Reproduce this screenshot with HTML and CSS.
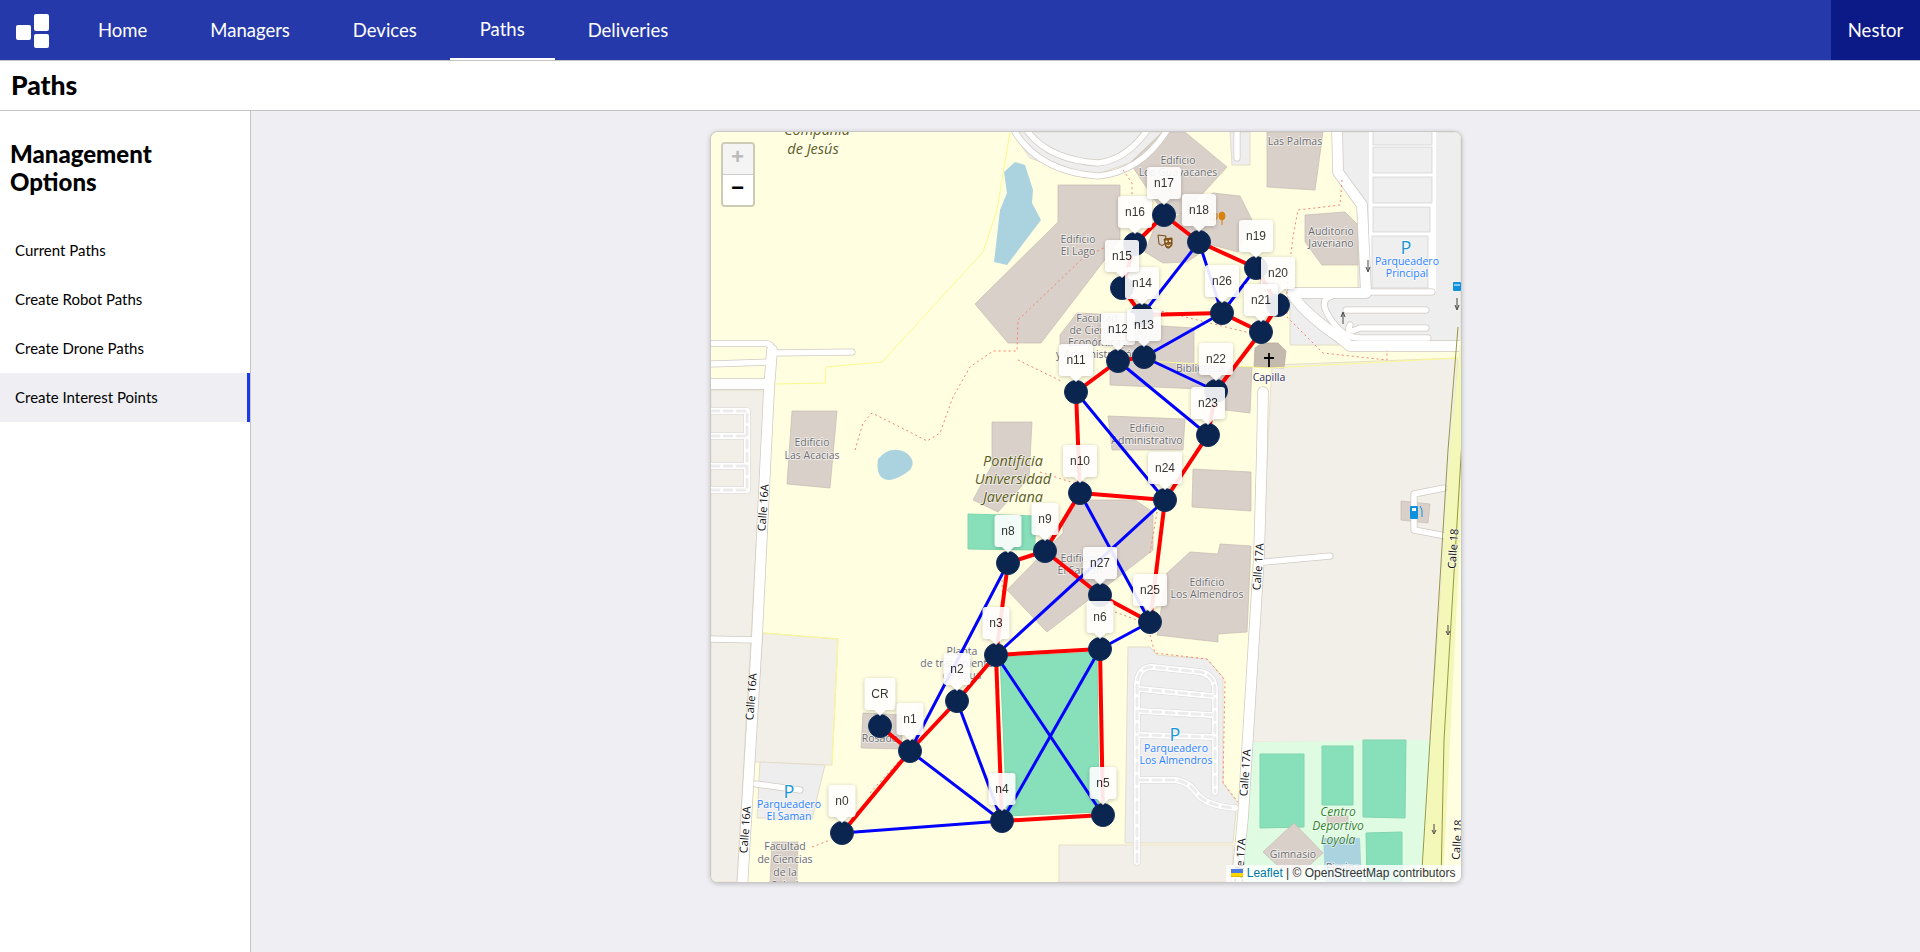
FILE: index.html
```html
<!DOCTYPE html>
<html lang="en">
<head>
    <meta charset="UTF-8">
    <meta name="viewport" content="width=device-width, initial-scale=1.0">
    <title>Paths</title>
    <link rel="stylesheet" href="styles.css">
</head>
<body>
    <nav class="navbar">
        <a class="logo" href="#">
            <svg width="33" height="34" viewBox="0 0 33 34">
                <rect x="0" y="11" width="15" height="15" rx="2"/>
                <rect x="18" y="0" width="15" height="17" rx="2"/>
                <rect x="18" y="20" width="15" height="14" rx="2"/>
            </svg>
        </a>
        <ul class="nav-links">
            <li><a href="#">Home</a></li>
            <li><a href="#">Managers</a></li>
            <li><a href="#">Devices</a></li>
            <li><a class="active" href="#">Paths</a></li>
            <li><a href="#">Deliveries</a></li>
        </ul>
        <a class="user" href="#">Nestor</a>
    </nav>
    <header class="page-title"><h1>Paths</h1></header>
    <div class="content">
        <aside class="sidebar">
            <h2>Management Options</h2>
            <ul class="side-links">
                <li><a href="#">Current Paths</a></li>
                <li><a href="#">Create Robot Paths</a></li>
                <li><a href="#">Create Drone Paths</a></li>
                <li><a class="active" href="#">Create Interest Points</a></li>
            </ul>
        </aside>
        <main class="main">
            <div class="map">
                <svg class="map-canvas" width="750" height="750" viewBox="711 132 750 750">
                    <defs>
                        <path id="tip-34" d="M-14 -48H14a3 3 0 0 1 3 3V-19a3 3 0 0 1 -3 3H6L0 -10L-6 -16H-14a3 3 0 0 1 -3 -3V-45a3 3 0 0 1 3 -3Z"/>
                        <path id="tip-27" d="M-10.500 -48H10.500a3 3 0 0 1 3 3V-19a3 3 0 0 1 -3 3H6L0 -10L-6 -16H-10.500a3 3 0 0 1 -3 -3V-45a3 3 0 0 1 3 -3Z"/>
                        <path id="tip-31" d="M-12.500 -48H12.500a3 3 0 0 1 3 3V-19a3 3 0 0 1 -3 3H6L0 -10L-6 -16H-12.500a3 3 0 0 1 -3 -3V-45a3 3 0 0 1 3 -3Z"/>
                        <g id="roads-wide">
                            <path d="M772 350L769 390L766 450L757 637L742 890"/>
                            <path d="M1263 392L1262 450L1259 556L1243 817L1236 890"/>
                            <path d="M711 384H769"/>
                            <path d="M1337 125L1338 172L1362 205L1366 292"/>
                            <path d="M1292 293H1366"/>
                            <path d="M1292 293Q1300 310 1340 338L1350 346H1460"/>
                        </g>
                        <g id="roads-thin">
                            <path d="M711 343.500H765Q772 343.500 772 350"/>
                            <path d="M772 353L852 352"/>
                            <path d="M711 364L769 362"/>
                            <path d="M1265 562L1330 556"/>
                            <path d="M1444 488L1414 494V530L1446 536"/>
                            <path d="M756 784L800 790"/>
                            <path d="M711 639L755 640"/>
                            <path d="M1366 292H1432"/>
                            <path d="M1332 296Q1315 300 1335 325Q1345 338 1360 338H1428"/>
                            <path d="M1350 325Q1345 335 1360 328H1426"/>
                            <path d="M1426 310H1346"/>
                            <path d="M1015 132Q1040 172 1098 176Q1140 172 1166 132"/>
                            <path d="M1028 132Q1050 160 1098 163Q1125 160 1146 132"/>
                            <path d="M1237 132V158"/>
                        </g>
                        <g id="lot-roads">
                            <path d="M1137 862V685Q1138 667 1152 667L1200 672Q1215 675 1215 690V792"/>
                            <path d="M1140 689L1212 696"/>
                            <path d="M1140 711L1212 715"/>
                            <path d="M1140 735L1212 737"/>
                            <path d="M1140 780H1175Q1190 782 1198 795Q1208 806 1235 808"/>
                            <path d="M711 411H747V490H711"/>
                            <path d="M711 436H747"/>
                            <path d="M711 466H747"/>
                        </g>
                    </defs>

                    <rect class="land" x="711" y="132" width="750" height="750"/>

                    <polygon class="plot" points="711,390 765,390 737,882 711,882"/>
                    <polygon class="plot" points="763,633 838,639 832,765 753,762"/>
                    <polygon class="plot" points="1272,365 1458,358 1430,742 1252,742"/>
                    <polygon class="plot" points="1059,845 1233,845 1233,882 1059,882"/>
                    <polygon class="lot" points="760,762 825,765 812,819 757,818"/>
                    <polygon class="lot" points="1128,647 1150,647 1157,655 1207,659 1223,677 1223,783 1237,802 1233,843 1125,843"/>
                    <polygon class="lot" points="1012,132 1030,158 1085,178 1130,163 1162,132"/>
                    <polygon class="lot" points="1337,132 1461,132 1461,345 1290,345 1290,292 1358,288 1358,205 1337,170"/>
                    <polygon class="lot" points="1230,132 1250,132 1250,165 1232,165"/>

                    <rect class="lot-white" x="1369" y="130" width="67" height="162"/>
                    <rect class="bay" x="1373" y="130" width="59" height="15"/>
                    <rect class="bay" x="1373" y="147" width="59" height="26"/>
                    <rect class="bay" x="1373" y="177" width="59" height="26"/>
                    <rect class="bay" x="1373" y="207" width="57" height="25"/>
                    <rect class="bay" x="1372" y="236" width="56" height="52"/>

                    <polygon class="sports" points="1253,742 1431,740 1421,882 1243,882"/>
                    <polygon class="pitch" points="1260,754 1304,754 1304,827 1260,828"/>
                    <polygon class="pitch" points="1322,746 1353,746 1353,805 1322,805"/>
                    <polygon class="pitch" points="1363,740 1406,740 1405,818 1363,817"/>
                    <polygon class="pitch" points="1366,833 1402,832 1402,882 1367,882"/>
                    <polygon class="pitch" points="968,514 1035,516 1035,550 968,549"/>
                    <polygon class="pitch" points="1000,657 1097,652 1099,812 1007,816"/>
                    <polygon class="water" points="1323,838 1360,838 1362,882 1325,882"/>
                    <polygon class="water" points="1015,162 1004,172 1007,193 1000,210 994,262 1007,265 1041,220 1032,203 1033,190 1025,165"/>
                    <path class="water" d="M878 459Q890 445 905 452Q917 460 910 470Q900 478 890 480Q875 480 878 459Z"/>

                    <polygon class="building" points="975,304 1058,222 1058,185 1120,185 1120,240 1041,343 1008,343"/>
                    <polygon class="building" points="1130,163 1163,132 1185,132 1227,167 1185,213 1165,215"/>
                    <polygon class="building" points="1213,193 1240,196 1252,220 1238,252 1212,245 1187,262 1163,263 1145,252 1156,223 1185,213"/>
                    <polygon class="building" points="1267,132 1323,132 1315,190 1267,187"/>
                    <polygon class="building" points="1305,215 1345,212 1358,225 1358,265 1322,265 1305,242"/>
                    <polygon class="building" points="1110,360 1145,325 1194,328 1194,365 1252,367 1250,413 1225,410 1222,390 1110,385"/>
                    <polygon class="building" points="1060,335 1077,313 1120,315 1120,345 1060,345"/>
                    <polygon class="building" points="1108,416 1185,419 1183,450 1112,450"/>
                    <polygon class="building" points="792,411 837,411 830,488 787,484"/>
                    <polygon class="building" points="992,422 1032,422 1029,478 998,512 973,500 992,465"/>
                    <polygon class="building" points="1007,590 1063,533 1063,520 1080,500 1135,500 1153,512 1153,550 1047,632"/>
                    <polygon class="building" points="1167,573 1190,552 1218,554 1220,544 1251,546 1247,632 1218,634 1218,642 1157,635"/>
                    <polygon class="building" points="1193,469 1251,472 1251,511 1192,507"/>
                    <polygon class="building" points="863,713 902,715 902,749 861,748"/>
                    <polygon class="building" points="772,842 798,842 797,882 770,882"/>
                    <polygon class="building" points="1294,823 1323,853 1293,880 1263,852"/>
                    <polygon class="building" points="1401,501 1430,504 1428,523 1401,520"/>
                    <rect class="building" x="1327" y="816" width="21" height="8"/>
                    <polygon class="chapel" points="1255,348 1262,343 1278,343 1286,351 1284,368 1254,367"/>

                    <path class="boundary" d="M1010 132L997 210L983 252L882 362L826 367L825 383L775 384"/>
                    <path class="boundary" d="M763 633L838 639L832 765"/>
                    <path class="boundary" d="M1130 360L1270 368L1458 358"/>

                    <use class="road-case wide" href="#roads-wide"/>
                    <use class="road-case thin" href="#roads-thin"/>
                    <use class="road wide" href="#roads-wide"/>
                    <use class="road thin" href="#roads-thin"/>
                    <use class="lot-road-case" href="#lot-roads"/>
                    <use class="lot-road" href="#lot-roads"/>
                    <use class="lot-road-dash" href="#lot-roads"/>

                    <path class="motorway" d="M1462 320L1450 450L1422 882H1443L1462 500Z"/>
                    <path class="motorway-edge" d="M1458 327L1448 450L1422 870M1462 440L1444 740L1441 882"/>

                    <g class="footways">
                        <path d="M855 450L863 423L872 413L900 427L927 441L940 433L953 397L970 367L993 351L1017 351L1018 320L1083 258L1120 240"/>
                        <path d="M1018 360L1063 382"/>
                        <path d="M1342 180L1340 205L1298 210L1293 237L1287 287V317L1323 353L1387 360V350"/>
                        <path d="M1123 170L1132 183L1132 197"/>
                        <path d="M1157 310L1250 333"/>
                        <path d="M1150 635L1155 653L1207 659L1225 680L1223 783L1238 802"/>
                        <path d="M1115 612L1137 620"/>
                        <path d="M1157 512L1150 553"/>
                        <path d="M812 847L830 840"/>
                        <path d="M870 793L900 760"/>
                        <path d="M1002 580L1003 607"/>
                        <path d="M1040 472L1080 485"/>
                    </g>

                    <g class="label">
                        <text x="1178" y="164">Edificio</text>
                        <text x="1178" y="176">Los Guayacanes</text>
                        <text x="1295" y="145">Las Palmas</text>
                        <text x="1078" y="243">Edificio</text>
                        <text x="1078" y="255">El Lago</text>
                        <text x="1331" y="235">Auditorio</text>
                        <text x="1331" y="247">Javeriano</text>
                        <text x="1097" y="322">Facultad</text>
                        <text x="1097" y="334">de Ciencias</text>
                        <text x="1097" y="346">Económicas</text>
                        <text x="1097" y="358">y Administración</text>
                        <text x="1200" y="372">Biblioteca</text>
                        <text x="1147" y="432">Edificio</text>
                        <text x="1147" y="444">Administrativo</text>
                        <text x="812" y="446">Edificio</text>
                        <text x="812" y="459">Las Acacias</text>
                        <text x="1078" y="562">Edificio</text>
                        <text x="1080" y="574">El Saman</text>
                        <text x="1207" y="586">Edificio</text>
                        <text x="1207" y="598">Los Almendros</text>
                        <text x="962" y="655">Planta</text>
                        <text x="957" y="667">de tratamiento</text>
                        <text x="962" y="679">de agua</text>
                        <text x="880" y="730">Lago</text>
                        <text x="880" y="742">Rosado</text>
                        <text x="785" y="850">Facultad</text>
                        <text x="785" y="863">de Ciencias</text>
                        <text x="785" y="876">de la</text>
                        <text x="785" y="889">Salud</text>
                        <text x="1293" y="858">Gimnasio</text>
                        <text x="1343" y="871">Piscina</text>
                    </g>
                    <g class="label-campus">
                        <text x="817" y="135">Compañía</text>
                        <text x="813" y="154">de Jesús</text>
                        <text x="1013" y="466">Pontificia</text>
                        <text x="1013" y="484">Universidad</text>
                        <text x="1013" y="502">Javeriana</text>
                    </g>
                    <g class="label-sports">
                        <text x="1338" y="816">Centro</text>
                        <text x="1338" y="830">Deportivo</text>
                        <text x="1338" y="844">Loyola</text>
                    </g>
                    <g class="label-parking">
                        <text class="parking-p" x="1406" y="254">P</text>
                        <text x="1407" y="265">Parqueadero</text>
                        <text x="1407" y="277">Principal</text>
                        <text class="parking-p" x="1175" y="741">P</text>
                        <text x="1176" y="752">Parqueadero</text>
                        <text x="1176" y="764">Los Almendros</text>
                        <text class="parking-p" x="789" y="798">P</text>
                        <text x="789" y="808">Parqueadero</text>
                        <text x="789" y="820">El Saman</text>
                    </g>
                    <text class="label-chapel" x="1269" y="381">Capilla</text>
                    <path class="chapel-cross" d="M1269 353V367M1264 358H1274"/>

                    <g class="label-road">
                        <text transform="translate(767 508) rotate(-86)">Calle 16A</text>
                        <text transform="translate(755 697) rotate(-86)">Calle 16A</text>
                        <text transform="translate(749 830) rotate(-86)">Calle 16A</text>
                        <text transform="translate(1262 567) rotate(-86)">Calle 17A</text>
                        <text transform="translate(1249 773) rotate(-86)">Calle 17A</text>
                        <text transform="translate(1244 862) rotate(-86)">Calle 17A</text>
                        <text transform="translate(1457 549) rotate(-86)">Calle 18</text>
                        <text transform="translate(1461 840) rotate(-86)">Calle 18</text>
                    </g>

                    <g class="oneway">
                        <path d="M1368 260V270M1366 267L1368 272L1370 267"/>
                        <path d="M1343 324V314M1341 317L1343 312L1345 317"/>
                        <path d="M1457 298V308M1455 305L1457 310L1459 305"/>
                        <path d="M1448 625V633M1446 631L1448 635L1450 631"/>
                        <path d="M1434 824V832M1432 830L1434 834L1436 830"/>
                    </g>

                    <!-- amenity icons -->
                    <g class="icon-masks" transform="translate(1165 242)">
                        <path d="M-7 -7L1 -6L0 2Q-3 5 -6 2Z"/>
                        <path class="mask-front" d="M-1 -3L7 -4L7 3Q4 8 1 5Z"/>
                        <circle class="mask-eye" cx="1.500" cy="-0.500" r="1"/>
                        <circle class="mask-eye" cx="5" cy="-1" r="1"/>
                        <path class="mask-mouth" d="M1.500 3Q3.500 5 5.500 2.500"/>
                    </g>
                    <g class="icon-food" transform="translate(1220 219)">
                        <path d="M-6 -6V6M-9 -6V-1Q-9 1 -6 1Q-3 1 -3 -1V-6"/>
                        <ellipse cx="2" cy="-3" rx="3" ry="4"/>
                        <path d="M2 0V6"/>
                    </g>
                    <g class="icon-fuel" transform="translate(1415 512)">
                        <rect x="-5" y="-6" width="8" height="13" rx="1"/>
                        <rect class="fuel-window" x="-3" y="-4" width="4" height="3"/>
                        <path d="M5 -6L7 -2V5"/>
                    </g>
                    <g class="icon-bus" transform="translate(1457 287)">
                        <rect x="-4" y="-5" width="8" height="9" rx="1"/>
                        <path class="bus-glass" d="M-3 -2H3"/>
                    </g>

                    <g class="edges-red">
                        <path d="M842 833L910 751"/>
                        <path d="M880 726L910 751"/>
                        <path d="M910 751L957 701"/>
                        <path d="M957 701L996 655"/>
                        <path d="M996 655L1008 563"/>
                        <path d="M1008 563L1045 551"/>
                        <path d="M1045 551L1080 493"/>
                        <path d="M1080 493L1165 500"/>
                        <path d="M1165 500L1150 622"/>
                        <path d="M1045 551L1100 595"/>
                        <path d="M1100 595L1150 622"/>
                        <path d="M996 655L1100 649"/>
                        <path d="M996 655L1002 821"/>
                        <path d="M1002 821L1103 815"/>
                        <path d="M1100 649L1103 815"/>
                        <path d="M1080 493L1076 392"/>
                        <path d="M1076 392L1118 361"/>
                        <path d="M1118 361L1144 357"/>
                        <path d="M1122 288L1142 315"/>
                        <path d="M1142 315L1222 313"/>
                        <path d="M1222 313L1261 332"/>
                        <path d="M1261 332L1278 305"/>
                        <path d="M1261 332L1216 391"/>
                        <path d="M1216 391L1208 435"/>
                        <path d="M1208 435L1165 500"/>
                        <path d="M1135 244L1164 215"/>
                        <path d="M1164 215L1199 242"/>
                        <path d="M1199 242L1256 268"/>
                        <path d="M1256 268L1278 305"/>
                        <path d="M1122 288L1135 244"/>
                    </g>
                    <g class="edges-blue">
                        <path d="M842 833L1002 821"/>
                        <path d="M910 751L1002 821"/>
                        <path d="M910 751L1008 563"/>
                        <path d="M957 701L1002 821"/>
                        <path d="M996 655L1165 500"/>
                        <path d="M996 655L1103 815"/>
                        <path d="M1100 649L1002 821"/>
                        <path d="M1100 649L1150 622"/>
                        <path d="M1080 493L1150 622"/>
                        <path d="M1076 392L1165 500"/>
                        <path d="M1118 361L1208 435"/>
                        <path d="M1144 357L1216 391"/>
                        <path d="M1144 357L1222 313"/>
                        <path d="M1142 315L1199 242"/>
                        <path d="M1199 242L1222 313"/>
                        <path d="M1222 313L1256 268"/>
                    </g>

                    <g class="nodes">
                        <circle cx="880" cy="726" r="11.500"/>
                        <circle cx="842" cy="833" r="11.500"/>
                        <circle cx="910" cy="751" r="11.500"/>
                        <circle cx="957" cy="701" r="11.500"/>
                        <circle cx="996" cy="655" r="11.500"/>
                        <circle cx="1002" cy="821" r="11.500"/>
                        <circle cx="1103" cy="815" r="11.500"/>
                        <circle cx="1100" cy="649" r="11.500"/>
                        <circle cx="1008" cy="563" r="11.500"/>
                        <circle cx="1045" cy="551" r="11.500"/>
                        <circle cx="1080" cy="493" r="11.500"/>
                        <circle cx="1076" cy="392" r="11.500"/>
                        <circle cx="1118" cy="361" r="11.500"/>
                        <circle cx="1144" cy="357" r="11.500"/>
                        <circle cx="1142" cy="315" r="11.500"/>
                        <circle cx="1122" cy="288" r="11.500"/>
                        <circle cx="1135" cy="244" r="11.500"/>
                        <circle cx="1164" cy="215" r="11.500"/>
                        <circle cx="1199" cy="242" r="11.500"/>
                        <circle cx="1256" cy="268" r="11.500"/>
                        <circle cx="1278" cy="305" r="11.500"/>
                        <circle cx="1261" cy="332" r="11.500"/>
                        <circle cx="1216" cy="391" r="11.500"/>
                        <circle cx="1208" cy="435" r="11.500"/>
                        <circle cx="1165" cy="500" r="11.500"/>
                        <circle cx="1150" cy="622" r="11.500"/>
                        <circle cx="1222" cy="313" r="11.500"/>
                        <circle cx="1100" cy="595" r="11.500"/>
                    </g>

                    <g class="tip" transform="translate(880 726)"><use href="#tip-31"/><text y="-28">CR</text></g>
                    <g class="tip" transform="translate(842 833)"><use href="#tip-27"/><text y="-28">n0</text></g>
                    <g class="tip" transform="translate(910 751)"><use href="#tip-27"/><text y="-28">n1</text></g>
                    <g class="tip" transform="translate(957 701)"><use href="#tip-27"/><text y="-28">n2</text></g>
                    <g class="tip" transform="translate(996 655)"><use href="#tip-27"/><text y="-28">n3</text></g>
                    <g class="tip" transform="translate(1002 821)"><use href="#tip-27"/><text y="-28">n4</text></g>
                    <g class="tip" transform="translate(1103 815)"><use href="#tip-27"/><text y="-28">n5</text></g>
                    <g class="tip" transform="translate(1100 649)"><use href="#tip-27"/><text y="-28">n6</text></g>
                    <g class="tip" transform="translate(1008 563)"><use href="#tip-27"/><text y="-28">n8</text></g>
                    <g class="tip" transform="translate(1045 551)"><use href="#tip-27"/><text y="-28">n9</text></g>
                    <g class="tip" transform="translate(1080 493)"><use href="#tip-34"/><text y="-28">n10</text></g>
                    <g class="tip" transform="translate(1076 392)"><use href="#tip-34"/><text y="-28">n11</text></g>
                    <g class="tip" transform="translate(1118 361)"><use href="#tip-34"/><text y="-28">n12</text></g>
                    <g class="tip" transform="translate(1144 357)"><use href="#tip-34"/><text y="-28">n13</text></g>
                    <g class="tip" transform="translate(1142 315)"><use href="#tip-34"/><text y="-28">n14</text></g>
                    <g class="tip" transform="translate(1122 288)"><use href="#tip-34"/><text y="-28">n15</text></g>
                    <g class="tip" transform="translate(1135 244)"><use href="#tip-34"/><text y="-28">n16</text></g>
                    <g class="tip" transform="translate(1164 215)"><use href="#tip-34"/><text y="-28">n17</text></g>
                    <g class="tip" transform="translate(1199 242)"><use href="#tip-34"/><text y="-28">n18</text></g>
                    <g class="tip" transform="translate(1256 268)"><use href="#tip-34"/><text y="-28">n19</text></g>
                    <g class="tip" transform="translate(1278 305)"><use href="#tip-34"/><text y="-28">n20</text></g>
                    <g class="tip" transform="translate(1261 332)"><use href="#tip-34"/><text y="-28">n21</text></g>
                    <g class="tip" transform="translate(1216 391)"><use href="#tip-34"/><text y="-28">n22</text></g>
                    <g class="tip" transform="translate(1208 435)"><use href="#tip-34"/><text y="-28">n23</text></g>
                    <g class="tip" transform="translate(1165 500)"><use href="#tip-34"/><text y="-28">n24</text></g>
                    <g class="tip" transform="translate(1150 622)"><use href="#tip-34"/><text y="-28">n25</text></g>
                    <g class="tip" transform="translate(1222 313)"><use href="#tip-34"/><text y="-28">n26</text></g>
                    <g class="tip" transform="translate(1100 595)"><use href="#tip-34"/><text y="-28">n27</text></g>
                </svg>

                <div class="zoom-control">
                    <a class="zoom-in" href="#">+</a>
                    <a class="zoom-out" href="#">−</a>
                </div>
                <div class="attribution">
                    <svg width="12" height="8" viewBox="0 0 12 8">
                        <rect width="12" height="4" fill="#4c7be1"/>
                        <rect y="4" width="12" height="3" fill="#ffd500"/>
                        <rect y="7" width="12" height="1" fill="#e0bc00"/>
                    </svg>
                    <a href="#">Leaflet</a> | © OpenStreetMap contributors
                </div>
            </div>
        </main>
    </div>
</body>
</html>
```

FILE: styles.css
```css
* {
    box-sizing: border-box;
}
html, body {
    height: 100%;
}
body {
    margin: 0;
    font-family: Lato, "Open Sans", sans-serif;
    color: #000;
    background-color: #fff;
    display: flex;
    flex-direction: column;
    overflow: hidden;
}
a {
    text-decoration: none;
    color: inherit;
}
ul {
    list-style: none;
    margin: 0;
    padding: 0;
}

/* top bar */
.navbar {
    height: 61px;
    flex: none;
    display: flex;
    align-items: stretch;
    background-color: #2539ab;
    border-bottom: 1px solid #c4c4c4;
    color: #fff;
    font-size: 18.500px;
}
.logo {
    width: 68px;
    padding: 14px 0 0 16px;
}
.logo svg {
    display: block;
    fill: #fff;
}
.nav-links {
    display: flex;
    flex: 1;
}
.nav-links a {
    display: block;
    height: 60px;
    line-height: 61px;
    padding: 0 30px;
    margin-right: 3px;
}
.nav-links a.active {
    line-height: 59px;
    border-bottom: 2px solid #fff;
}
.user {
    width: 89px;
    text-align: center;
    line-height: 61px;
    background-color: #0c1a87;
}

.page-title {
    height: 50px;
    flex: none;
    padding-left: 11px;
    border-bottom: 1px solid #c4c4c4;
}
.page-title h1 {
    margin: 0;
    font-size: 26.500px;
    font-weight: 900;
    line-height: 48px;
}

.content {
    flex: 1;
    display: flex;
    min-height: 0;
}

/* left menu */
.sidebar {
    width: 251px;
    flex: none;
    padding-top: 29px;
    border-right: 1px solid #c4c4c4;
}
.sidebar h2 {
    margin: 0 0 30px 10px;
    font-size: 24px;
    font-weight: 900;
    line-height: 28px;
    width: 190px;
}
.side-links a {
    display: block;
    height: 49px;
    line-height: 49px;
    padding-left: 15px;
    font-size: 15px;
}
.side-links a.active {
    background-color: #eeeef3;
    border-right: 3px solid #1a3ae8;
}

.main {
    flex: 1;
    display: flex;
    justify-content: center;
    align-items: flex-start;
    padding-top: 20px;
    background-color: #eeeef3;
}

/* map */
.map {
    position: relative;
    width: 752px;
    height: 752px;
    border: 1px solid #c8c8c8;
    border-radius: 8px;
    overflow: hidden;
    box-shadow: 0 1px 5px rgba(0, 0, 0, 0.2);
    background-color: #fffee0;
}
.map-canvas {
    display: block;
}
.land { fill: #fffee0; }
.plot { fill: #f2efe9; stroke: #e8e0c8; }
.lot { fill: #eeeeee; stroke: #e2dcc8; }
.lot-white { fill: #fff; }
.bay { fill: #efefef; stroke: #cfcfcf; stroke-width: 0.7; }
.sports { fill: #dffce2; }
.pitch { fill: #88e0bb; stroke: #7fd4ae; }
.water { fill: #aad3df; }
.building { fill: #d9d0c9; stroke: #c6bab0; stroke-width: 0.7; }
.chapel { fill: #c4b9ad; stroke: #b5a89a; stroke-width: 0.7; }
.boundary { fill: none; stroke: #fbf98f; stroke-width: 1; }

.road-case, .road, .lot-road-case, .lot-road, .lot-road-dash {
    fill: none;
    stroke-linecap: round;
    stroke-linejoin: round;
}
.road-case { stroke: #cfcac4; }
.road { stroke: #fff; }
.road-case.wide { stroke-width: 11.500; }
.road.wide { stroke-width: 10; }
.road-case.thin { stroke-width: 7; }
.road.thin { stroke-width: 5.500; }
.lot-road-case { stroke: #d6d6d6; stroke-width: 7; }
.lot-road { stroke: #fff; stroke-width: 6; }
.lot-road-dash { stroke: #ececec; stroke-width: 3; stroke-dasharray: 8 5; }

.motorway { fill: #f3f7b8; }
.motorway-edge { fill: none; stroke: #98983f; stroke-width: 1; }
.footways path {
    fill: none;
    stroke: #fa8072;
    stroke-width: 1;
    stroke-dasharray: 2 3;
}

.label text, .label-campus text, .label-sports text, .label-parking text, .label-road text, .label-chapel {
    font-family: "Open Sans", sans-serif;
    text-anchor: middle;
    stroke: rgba(255, 255, 255, 0.7);
    stroke-width: 1.500;
    paint-order: stroke;
}
.label text { font-size: 10.500px; fill: #6a6a6a; }
.label-campus text { font-size: 14.500px; font-style: italic; fill: #5c5c14; }
.label-sports text { font-size: 12px; font-style: italic; fill: #2f7f2f; }
.label-parking text { font-size: 10.500px; fill: #2a7fff; }
.label-parking .parking-p { font-size: 18px; fill: #1a96d6; }
.label-road text { font-size: 11px; fill: #111; }
.label-chapel { font-size: 10.500px; fill: #2b2b5c; }
.chapel-cross { fill: none; stroke: #000; stroke-width: 1.800; }

.oneway path { fill: none; stroke: #444; stroke-width: 1; }
.icon-masks { fill: none; stroke: #7a4a12; stroke-width: 1; }
.icon-masks .mask-front { fill: #8a5a1c; }
.icon-masks .mask-eye { fill: #fffbe8; stroke: none; }
.icon-masks .mask-mouth { stroke: #fffbe8; }
.icon-food { fill: #d9820f; stroke: #d9820f; stroke-width: 1; }
.icon-food path { fill: none; }
.icon-fuel { fill: #0f92de; }
.icon-fuel .fuel-window { fill: #fff; }
.icon-fuel path { fill: none; stroke: #0f92de; }
.icon-bus { fill: #0f92de; }
.icon-bus .bus-glass { stroke: #fff; }

.edges-red path { fill: none; stroke: #f00; stroke-width: 4; }
.edges-blue path { fill: none; stroke: #00f; stroke-width: 3; }
.nodes circle { fill: #0a2550; stroke: #152f5c; stroke-width: 1; }

.tip {
    opacity: 0.9;
    filter: drop-shadow(0 1px 2px rgba(0, 0, 0, 0.25));
}
.tip use { fill: #fff; }
.tip text {
    font-family: "Liberation Sans", Arial, sans-serif;
    font-size: 12px;
    text-anchor: middle;
    fill: #222;
}

.zoom-control {
    position: absolute;
    top: 10px;
    left: 10px;
    width: 34px;
    border: 2px solid rgba(0, 0, 0, 0.2);
    border-radius: 4px;
    font-family: "Liberation Mono", monospace;
    font-size: 22px;
    font-weight: bold;
    text-align: center;
    background-clip: padding-box;
}
.zoom-control a {
    display: block;
    height: 30px;
    line-height: 30px;
    background-color: #fff;
}
.zoom-control .zoom-in {
    height: 31px;
    color: #bbb;
    background-color: #f4f4f4;
    border-bottom: 1px solid #ccc;
    border-radius: 2px 2px 0 0;
}
.zoom-control .zoom-out {
    border-radius: 0 0 2px 2px;
}

.attribution {
    position: absolute;
    right: 0;
    bottom: 0;
    padding: 0 5px;
    height: 17px;
    line-height: 17px;
    font-family: "Liberation Sans", Arial, sans-serif;
    font-size: 12px;
    color: #333;
    background-color: rgba(255, 255, 255, 0.8);
}
.attribution a {
    color: #0078a8;
}
```
